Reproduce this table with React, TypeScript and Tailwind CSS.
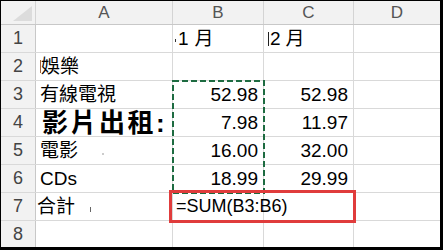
import React from "react";

const sans = "font-['Liberation_Sans',Arial,sans-serif]";
const cjk = "font-['Liberation_Sans','Noto_Sans_CJK_TC',sans-serif]";

type Row = {
  n: number;
  a?: React.ReactNode;
  b?: React.ReactNode;
  c?: React.ReactNode;
};

const rows: Row[] = [
  {
    n: 1,
    b: (
      <span className="pl-[2px] flex items-center">
        <span className="inline-block w-[1px] h-[3px] bg-[#333] mt-[4px] mr-[2px]" />
        1<span className="ml-[6px]">月</span>
      </span>
    ),
    c: (
      <span className="pl-[4px] flex items-center">
        <span className="inline-block w-[1px] h-[14px] bg-[#222] mr-[1px]" />
        2<span className="ml-[5px]">月</span>
      </span>
    ),
  },
  {
    n: 2,
    a: (
      <span className="pl-[4px] flex items-center">
        <span className="inline-block w-[1px] h-[13px] bg-[#a0603a]" />
        娛樂
      </span>
    ),
  },
  { n: 3, a: <span className="pl-[4px]">有線電視</span>, b: "52.98", c: "52.98" },
  {
    n: 4,
    a: (
      <span className="pl-[6px] text-[26px] font-bold leading-[26px] tracking-[2.5px] whitespace-nowrap">
        影片出租:
      </span>
    ),
    b: "7.98",
    c: "11.97",
  },
  {
    n: 5,
    a: (
      <span className="pl-[4px] flex items-center">
        電影
        <span className="inline-block w-[2px] h-[2px] bg-[#ccc] ml-[24px] mt-[6px]" />
      </span>
    ),
    b: "16.00",
    c: "32.00",
  },
  { n: 6, a: <span className="pl-[4px]">CDs</span>, b: "18.99", c: "29.99" },
  {
    n: 7,
    a: (
      <span className="pl-[1px] flex items-center">
        合計
        <span className="inline-block w-[1px] h-[5px] bg-[#666] ml-[15px] mt-[6px]" />
      </span>
    ),
    b: <span className="pl-[3px] whitespace-nowrap text-[18px]">=SUM(B3:B6)</span>,
  },
  { n: 8 },
];

function Cell({
  children,
  w,
  right,
  overflow,
}: {
  children?: React.ReactNode;
  w: string;
  right?: boolean;
  overflow?: boolean;
}) {
  return (
    <div
      className={`${w} h-full border-r border-[#d9d9d9] flex items-center ${
        right ? "justify-end pr-[5px]" : ""
      } ${overflow ? "overflow-visible relative z-10" : "overflow-hidden"}`}
    >
      {children}
    </div>
  );
}

export default function App() {
  return (
    <div className="w-[443px] h-[250px] bg-white overflow-hidden">
      <div
        className={`relative w-[443px] h-[250px] border-l border-t border-r-[3px] border-b-[3px] border-black overflow-hidden ${cjk} text-[19px] text-black`}
      >
        {/* column headers */}
        <div className="flex h-[24px] bg-[#f2f2f2] border-b border-[#c8c8c8] text-[#555] text-[17px]">
          <div className="w-[35px] border-r border-[#d4d4d4] flex justify-end items-end pr-[3px] pb-[3px]">
            <svg width="19" height="15" viewBox="0 0 19 15">
              <polygon points="19,0 19,15 0,15" fill="#dcdcdc" />
            </svg>
          </div>
          <div className={`w-[137px] border-r border-[#d4d4d4] flex items-center justify-center ${sans}`}>A</div>
          <div className={`w-[91px] border-r border-[#d4d4d4] flex items-center justify-center ${sans}`}>B</div>
          <div className={`w-[90px] border-r border-[#d4d4d4] flex items-center justify-center ${sans}`}>C</div>
          <div className={`w-[86px] flex items-center justify-center ${sans}`}>D</div>
        </div>

        {rows.map((r) => (
          <div key={r.n} className="flex h-[28px] border-b border-[#d9d9d9] leading-[27px]">
            <div
              className={`w-[35px] h-full bg-[#f2f2f2] border-r border-[#c8c8c8] flex items-center justify-center text-[18px] text-[#444] ${sans}`}
            >
              {r.n}
            </div>
            <Cell w="w-[137px]">{r.a}</Cell>
            <Cell w="w-[91px]" right={typeof r.b === "string"} overflow={r.n === 7}>
              {r.b}
            </Cell>
            <Cell w="w-[90px]" right={typeof r.c === "string"}>
              {r.c}
            </Cell>
            <div className="w-[86px] h-full" />
          </div>
        ))}

        {/* copy selection B3:B6 */}
        <svg
          className="absolute left-[170px] top-[79px] z-20"
          width="95"
          height="115"
          viewBox="0 0 95 115"
        >
          <rect
            x="2"
            y="1"
            width="91"
            height="112"
            fill="none"
            stroke="#1d6b41"
            strokeWidth="2"
            strokeDasharray="6 3"
          />
        </svg>

        {/* highlight B7 formula */}
        <div className="absolute left-[168px] top-[189px] w-[187px] h-[33px] border-[3px] border-[#e03c3c] z-20" />
      </div>
    </div>
  );
}
